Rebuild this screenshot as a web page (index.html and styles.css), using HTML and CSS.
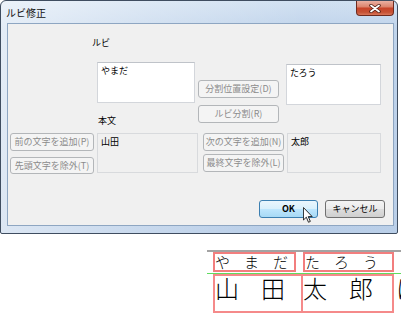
FILE: index.html
```html
<!DOCTYPE html>
<html lang="ja">
<head>
<meta charset="utf-8">
<link rel="stylesheet" href="styles.css">
</head>
<body>
<div class="window">
  <div class="titlebar">
    <span class="title">ルビ修正</span>
    <div class="close">
      <svg width="12" height="9" viewBox="0 0 12 9">
        <path d="M2 1.5 L10 7.5 M10 1.5 L2 7.5" stroke="#4a1a12" stroke-width="3.4" stroke-linecap="round"/>
        <path d="M2 1.5 L10 7.5 M10 1.5 L2 7.5" stroke="#ffffff" stroke-width="1.8" stroke-linecap="round"/>
      </svg>
    </div>
  </div>
  <div class="client">
    <div class="upper">
      <div class="col-left">
        <div class="btn dis btn-p">前の文字を追加(P)</div>
        <div class="btn dis btn-t">先頭文字を除外(T)</div>
      </div>
      <div class="col-text">
        <div class="label l-ruby">ルビ</div>
        <div class="tb tb1">やまだ</div>
        <div class="label l-body">本文</div>
        <div class="tb ro tb3">山田</div>
      </div>
      <div class="col-mid">
        <div class="btn dis btn-d">分割位置設定(D)</div>
        <div class="btn dis btn-r">ルビ分割(R)</div>
        <div class="btn dis btn-n">次の文字を追加(N)</div>
        <div class="btn dis btn-l">最終文字を除外(L)</div>
      </div>
      <div class="col-right">
        <div class="tb tb2">たろう</div>
        <div class="tb ro tb4">太郎</div>
      </div>
    </div>
    <div class="footer">
      <div class="btn ok">OK</div>
      <div class="btn cancel">キャンセル</div>
    </div>
  </div>
  <svg class="cursor" width="10" height="16" viewBox="0 0 12 19">
    <path d="M0.5 0.5 L0.5 15.5 L4 12.2 L6.6 18.2 L8.8 17.2 L6.3 11.4 L11 11.4 Z" fill="#fff" stroke="#000" stroke-width="1" stroke-linejoin="round"/>
  </svg>
</div>
<div class="figure">
  <div class="gline"></div>
  <div class="ruby-row">
    <div class="rbox rbox1"><span class="rc">や</span><span class="rc">ま</span><span class="rc">だ</span></div>
    <div class="rbox rbox2"><span class="rc">た</span><span class="rc">ろ</span><span class="rc">う</span></div>
  </div>
  <div class="green"></div>
  <div class="base-row">
    <div class="bbox bbox1"><span class="bc">山</span><span class="bc">田</span></div>
    <div class="bbox bbox2"><span class="bc">太</span><span class="bc">郎</span></div>
    <div class="bnext">は</div>
  </div>
</div>
</body>
</html>
```

FILE: styles.css
```css
body {
  margin: 0;
  width: 401px;
  height: 321px;
  overflow: hidden;
  background: #fff;
  font-family: "Noto Sans CJK JP", sans-serif;
  color: #000;
}

.window {
  position: relative;
  width: 398px;
  height: 234px;
  box-sizing: border-box;
  border: 1px solid #3f4d60;
  border-radius: 6px 6px 2px 2px;
  background:
    linear-gradient(100deg, rgba(255,255,255,0.6) 0%, rgba(255,255,255,0.3) 35%, rgba(255,255,255,0.05) 70%),
    linear-gradient(#cfdff1 0%, #bdd2ea 12%, #b6cce7 100%);
  display: flex;
  flex-direction: column;
}

.titlebar {
  height: 22px;
  display: flex;
  align-items: flex-start;
}

.title {
  font-size: 10px;
  line-height: 12px;
  margin: 6px 0 0 5px;
  color: #111;
}

.close {
  margin-left: auto;
  margin-right: 3px;
  width: 38px;
  height: 15px;
  box-sizing: border-box;
  border: 1px solid #6e2a1e;
  border-top: none;
  border-radius: 0 0 4px 4px;
  background: linear-gradient(#eab0a2 0%, #dc8670 40%, #c8442a 52%, #c65235 80%, #d9765a 100%);
  display: flex;
  align-items: center;
  justify-content: center;
}

.client {
  margin: 0 3px 0 6px;
  height: 203px;
  box-sizing: border-box;
  border: 1px solid #8ea6c2;
  background: #f0f0f0;
  display: flex;
  flex-direction: column;
}

.upper {
  display: flex;
  height: 150px;
}

.col-left {
  display: flex;
  flex-direction: column;
  margin-left: 2px;
  padding-top: 109px;
  width: 84px;
}

.col-text {
  display: flex;
  flex-direction: column;
  margin-left: 3px;
  width: 101px;
}

.col-mid {
  display: flex;
  flex-direction: column;
  width: 86px;
}

.col-right {
  display: flex;
  flex-direction: column;
}

.label {
  font-size: 9px;
  line-height: 12px;
  height: 12px;
  white-space: nowrap;
}

.l-ruby { margin: 13px 0 0 -5px; }
.l-body { margin: 12px 0 0 1px; }

.tb {
  box-sizing: border-box;
  border: 1px solid #d3d6db;
  border-top-color: #bfc3c9;
  background: #fff;
  font-size: 9px;
  line-height: 12px;
  padding: 2px 3px;
}

.tb.ro {
  background: #f0f0f0;
  border-color: #d8dadd;
}

.tb1 { margin-top: 13px; width: 98px; height: 41px; }
.tb3 { margin-top: 6px; width: 101px; height: 40px; }
.tb2 { margin: 40px 0 0 2px; width: 95px; height: 41px; }
.tb4 { margin: 28px 0 0 3px; width: 94px; height: 40px; }

.btn {
  box-sizing: border-box;
  border: 1px solid #707070;
  border-radius: 3px;
  font-size: 9px;
  line-height: 12px;
  display: flex;
  align-items: center;
  justify-content: center;
  white-space: nowrap;
}

.btn.dis {
  border-color: #b3b6b9;
  background: #f4f4f4;
  color: #8b8b8b;
}

.btn-p { width: 84px; height: 18px; }
.btn-t { width: 84px; height: 17px; margin-top: 6px; }

.btn-d { width: 81px; height: 18px; margin-top: 56px; }
.btn-r { width: 81px; height: 18px; margin-top: 7px; }
.btn-n { width: 81px; height: 18px; margin-top: 10px; margin-left: 5px; }
.btn-l { width: 81px; height: 18px; margin-top: 3px; margin-left: 5px; }

.footer {
  display: flex;
  justify-content: flex-end;
  gap: 7px;
  margin-top: 26px;
  margin-right: 8px;
}

.ok {
  width: 59px;
  height: 18px;
  border-color: #3c7fb1;
  background: linear-gradient(#eaf6fd 0%, #d9f0fc 48%, #bee6fd 52%, #a7d9f5 100%);
  font-weight: bold;
}

.cancel {
  width: 60px;
  height: 18px;
  background: linear-gradient(#f4f4f4 0%, #ebebeb 48%, #dddddd 52%, #cfcfcf 100%);
}

.cursor {
  position: absolute;
  left: 302px;
  top: 206px;
}

.figure {
  margin: 16px 0 0 207px;
  width: 194px;
  overflow: hidden;
}

.gline {
  height: 2px;
  background: #a3a3a3;
}

.ruby-row {
  display: flex;
  height: 20px;
}

.rbox {
  flex-shrink: 0;
  box-sizing: border-box;
  height: 20px;
  border: 2px solid #f27e7e;
  display: flex;
  align-items: center;
}

.rc {
  flex-shrink: 0;
  width: 29px;
  font-size: 15px;
  line-height: 16px;
  font-weight: 300;
}

.rbox1 { margin-left: 6px; width: 83px; }
.rbox2 { margin-left: 7px; width: 91px; }

.green {
  height: 1px;
  margin-top: 1px;
  background: #5fdc5f;
}

.base-row {
  display: flex;
  height: 39px;
}

.bbox {
  flex-shrink: 0;
  box-sizing: border-box;
  height: 39px;
  border: 2px solid #f58a8a;
  display: flex;
}

.bc {
  flex-shrink: 0;
  width: 46px;
  font-size: 24px;
  line-height: 24px;
  font-weight: 300;
}

.bbox1 { margin-left: 6px; width: 90px; }
.bbox2 { margin-left: -2px; width: 93px; }

.bnext {
  flex-shrink: 0;
  margin-left: 2px;
  font-size: 24px;
  line-height: 24px;
  padding-top: 2px;
  font-weight: 300;
  white-space: nowrap;
}
```
